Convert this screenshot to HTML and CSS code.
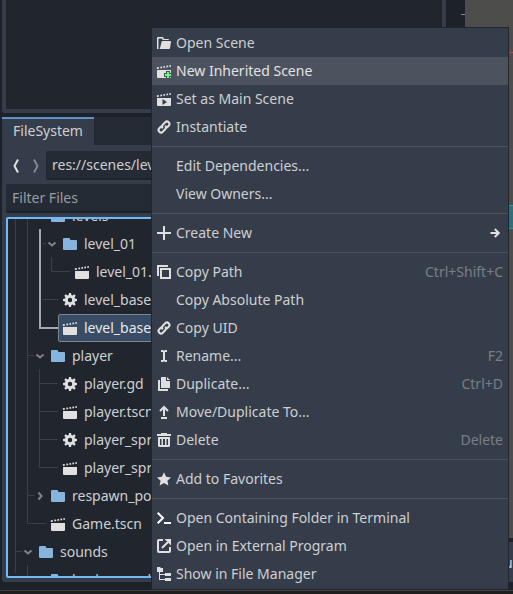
FILE: index.html
```
<!DOCTYPE html>
<html lang="en">
<head>
<meta charset="utf-8">
<title>FileSystem</title>
<link rel="stylesheet" href="styles.css">
</head>
<body>
<svg class="defs" width="0" height="0">
  <symbol id="folder" viewBox="0 0 16 16"><path d="M2 2h5a1 1 0 0 1 1 1a1 1 0 0 0 1 1h5a1 1 0 0 1 1 1v8a1 1 0 0 1-1 1H2a1 1 0 0 1-1-1V3a1 1 0 0 1 1-1z"/></symbol>
  <symbol id="scene" viewBox="0 0 16 16"><path d="M1 7h14v7a1 1 0 0 1-1 1H2a1 1 0 0 1-1-1zM.8 4.300l1.800-.3.400 1.700-2.100.3zM4.200 3.700l1.700-.3.400 1.700-1.700.3zM7.200 3.200l1.700-.3.400 1.700-1.700.3zM10.200 2.700l1.700-.3.400 1.700-1.700.3zM13.200 2.200l1.500-.2.300 1.700-1.500.2z"/></symbol>
  <symbol id="gear" viewBox="0 0 16 16"><path fill-rule="evenodd" d="M7 1h2l.4 2 1.200.5 1.700-1.200 1.400 1.400-1.200 1.700.5 1.200 2 .4v2l-2 .4-.5 1.200 1.200 1.700-1.400 1.400-1.700-1.200-1.200.5L9 15H7l-.4-2-1.200-.5-1.700 1.200-1.400-1.400 1.200-1.700L3 9.400 1 9V7l2-.4.5-1.200-1.200-1.700 1.400-1.400 1.700 1.200L6.600 3zM8 5.800a2.200 2.200 0 1 0 0 4.400a2.200 2.200 0 0 0 0-4.400z"/></symbol>
  <symbol id="down" viewBox="0 0 16 16"><path class="line" d="M4.500 6.500L8 9.500l3.500-3"/></symbol>
  <symbol id="right" viewBox="0 0 16 16"><path class="line" d="M6.500 4.500L9.500 8l-3 3.500"/></symbol>
  <symbol id="link" viewBox="0 0 16 16"><g class="line"><path d="M6.800 9.200a2.500 2.500 0 0 1 0-3.500l2.400-2.400a2.400 2.400 0 0 1 3.500 3.500l-1.900 1.900"/><path d="M9.200 6.800a2.500 2.500 0 0 1 0 3.500l-2.400 2.400a2.400 2.400 0 0 1-3.500-3.500l1.900-1.900"/></g></symbol>
</svg>
<div class="editor">
  <div class="dock">
    <div class="upper"></div>
    <div class="tabs"><div class="tab">FileSystem</div></div>
    <div class="panel">
      <div class="pathbar">
        <svg class="nav" viewBox="0 0 10 16"><path d="M7 1.500L3.500 8 7 14.500"/></svg>
        <svg class="nav off" viewBox="0 0 10 16"><path d="M3 1.500L6.500 8 3 14.500"/></svg>
        <div class="field path">res://scenes/lev</div>
      </div>
      <div class="field filter">Filter Files</div>
      <div class="tree">
        <svg class="guides" width="90" height="357" viewBox="8 219 90 357">
          <path d="M15.500 219V573M27.500 219V523.500H46M16 551.500h6M28 355.500h6M28 495.500h6M27.500 565v11M39.500 369V467.500H58M40 383.500h18M40 411.500h18M40 439.500h18M51.500 257v14.500H70M43 299.500h15M43 243.500h3"/>
          <path class="active" d="M40 229v99h18"/>
        </svg>
        <div class="rows">
          <div class="row d2"><svg></svg><svg class="dir"><use href="#folder"/></svg><span>levels</span></div>
          <div class="row d3"><svg class="arrow"><use href="#down"/></svg><svg class="dir"><use href="#folder"/></svg><span>level_01</span></div>
          <div class="row d4 leaf"><svg><use href="#scene"/></svg><span>level_01.tscn</span></div>
          <div class="row d3 leaf"><svg><use href="#gear"/></svg><span>level_base.gd</span></div>
          <div class="row d3 leaf selected"><svg><use href="#scene"/></svg><span>level_base.tscn</span></div>
          <div class="row d2"><svg class="arrow"><use href="#down"/></svg><svg class="dir"><use href="#folder"/></svg><span>player</span></div>
          <div class="row d3 leaf"><svg><use href="#gear"/></svg><span>player.gd</span></div>
          <div class="row d3 leaf"><svg><use href="#scene"/></svg><span>player.tscn</span></div>
          <div class="row d3 leaf"><svg><use href="#gear"/></svg><span>player_spr</span></div>
          <div class="row d3 leaf"><svg><use href="#scene"/></svg><span>player_spr</span></div>
          <div class="row d2"><svg class="arrow"><use href="#right"/></svg><svg class="dir"><use href="#folder"/></svg><span>respawn_po</span></div>
          <div class="row d2 leaf"><svg><use href="#scene"/></svg><span>Game.tscn</span></div>
          <div class="row d1"><svg class="arrow"><use href="#down"/></svg><svg class="dir"><use href="#folder"/></svg><span>sounds</span></div>
          <div class="row d2"><svg></svg><svg class="dir"><use href="#folder"/></svg><span>background</span></div>
        </div>
      </div>
    </div>
  </div>
  <div class="gutter"><i></i></div>
  <div class="side">
    <div class="view"><div class="red"></div><div class="teal"></div></div>
    <div class="below">u</div>
  </div>
  <div class="footer"></div>

  <div class="menu">
    <div class="item"><svg viewBox="0 0 16 16"><path d="M2 2a1 1 0 0 0-1 1v10.500q0 .5.6.5h.9V3.500H6q0 1.500 1.500 1.500H13q0-1-1-1H8.500Q7.500 4 7.500 3T6.500 2zM6.500 6a1 1 0 0 0-1 1L4 13q0 1-1 1h10a1 1 0 0 0 1-1l1-6q0-1-1-1z"/></svg><span>Open Scene</span></div>
    <div class="item hover"><svg viewBox="0 0 16 16"><use href="#scene"/><path class="cut" d="M10 8h4v2h2v4h-2v2h-4v-2H8v-4h2z"/><path class="green" d="M11 9h2v2h2v2h-2v2h-2v-2H9v-2h2z"/></svg><span>New Inherited Scene</span></div>
    <div class="item"><svg viewBox="0 0 16 16"><use href="#scene"/><path class="hole" d="M6.500 8v6L11 11z"/></svg><span>Set as Main Scene</span></div>
    <div class="item"><svg><use href="#link"/></svg><span>Instantiate</span></div>
    <div class="sep"></div>
    <div class="item"><svg></svg><span>Edit Dependencies...</span></div>
    <div class="item"><svg></svg><span>View Owners...</span></div>
    <div class="sep"></div>
    <div class="item"><svg viewBox="0 0 16 16"><path d="M7 1h2v6h6v2H9v6H7V9H1V7h6z"/></svg><span>Create New</span><svg class="more" viewBox="0 0 16 16"><path class="line" d="M3.500 8H11M7.800 4L11.800 8l-4 4"/></svg></div>
    <div class="sep"></div>
    <div class="item"><svg viewBox="0 0 16 16"><path fill-rule="evenodd" d="M1 1h11v2H3v9H1zM4 4h11v11H4zM6 6v7h7V6z"/></svg><span>Copy Path</span><kbd>Ctrl+Shift+C</kbd></div>
    <div class="item"><svg></svg><span>Copy Absolute Path</span></div>
    <div class="item"><svg><use href="#link"/></svg><span>Copy UID</span></div>
    <div class="item"><svg viewBox="0 0 16 16"><path d="M5 2h2l1 .7L9 2h2v2H9v8h2v2H9l-1-.7-1 .7H5v-2h2V4H5z"/></svg><span>Rename...</span><kbd>F2</kbd></div>
    <div class="item"><svg viewBox="0 0 16 16"><path d="M5 1h5v4h4v7H5zM11 1l3 3h-3zM2 4h2v9h8v2H2z"/></svg><span>Duplicate...</span><kbd>Ctrl+D</kbd></div>
    <div class="item"><svg viewBox="0 0 16 16"><path class="line" d="M8 12V3M4 7l4-4 4 4M5 14h6"/></svg><span>Move/Duplicate To...</span></div>
    <div class="item"><svg viewBox="0 0 16 16"><path fill-rule="evenodd" d="M5 2V1h6v1h4v2H1V2zM2 5h12v9l-1 1H3l-1-1zM4 7v6h1.500V7zM7 7v6h2V7zM10.500 7v6H12V7z"/></svg><span>Delete</span><kbd>Delete</kbd></div>
    <div class="sep"></div>
    <div class="item"><svg viewBox="0 0 16 16"><path d="M8 1.300l2.100 4.500 4.900.6-3.600 3.300 1 4.800L8 12.100l-4.400 2.400 1-4.800L1 6.400l4.900-.6z"/></svg><span>Add to Favorites</span></div>
    <div class="sep"></div>
    <div class="item"><svg class="white" viewBox="0 0 16 16"><path class="line" d="M1.700 2.700L7 8l-5.300 5.300M8 13h7"/></svg><span>Open Containing Folder in Terminal</span></div>
    <div class="item"><svg viewBox="0 0 16 16"><path class="line" d="M7 2H3a1 1 0 0 0-1 1v10a1 1 0 0 0 1 1h10a1 1 0 0 0 1-1V9M6 10l6-6"/><path d="M8.500 1H15v6.500z"/></svg><span>Open in External Program</span></div>
    <div class="item"><svg viewBox="0 0 16 16"><path d="M1 1h3l1 1h2v4H4v2h5V7h6v3H9V9H4v4h5v-1h6v3H9v-1H3V6H1z"/></svg><span>Show in File Manager</span></div>
  </div>
</div>
</body>
</html>
```
FILE: styles.css
```
* { box-sizing: border-box; }
body { margin: 0; background: #1d2229; font: 14px/20px "Noto Sans", sans-serif; color: #cdcfd2; }
svg { width: 16px; height: 16px; flex: none; fill: #e0e0e0; stroke: none; }
.defs { position: absolute; width: 0; height: 0; }
.line { fill: none; stroke: #e0e0e0; stroke-width: 2; }
.editor { position: relative; width: 513px; height: 594px; overflow: hidden; display: grid; grid-template-columns: 446px 19px 48px; grid-template-rows: 590px 4px; }
.dock { padding-left: 2px; display: flex; flex-direction: column; }
.upper { height: 113px; border: solid #363d4a; border-width: 0 4px 4px; border-radius: 0 0 3px 3px; background: #21262e; }
.tabs { margin-top: 4px; height: 28px; background: #252b34; display: flex; }
.tab { width: 92px; background: #363d4a; border-top: 2px solid #5c93c9; padding: 2px 0 0 11px; }
.panel { height: 437px; background: #363d4a; padding: 6px 4px 4px; border-radius: 0 0 3px 3px; }
.pathbar { display: flex; height: 29px; align-items: center; }
.nav { width: 20px; height: 16px; fill: none; stroke: #e0e0e0; stroke-width: 2; }
.nav.off { opacity: .45; }
.field { background: #252b34; border-bottom: 2px solid #1d2229; height: 29px; padding: 4px 6px 0; border-radius: 2px; white-space: nowrap; overflow: hidden; }
.path { flex: 1; }
.filter { margin-top: 4px; color: #999da3; }
.tree { position: relative; margin-top: 4px; height: 361px; border: 2px solid #70bafa; border-radius: 2px; background: #21262e; overflow: hidden; }
.guides { position: absolute; left: 0; top: 0; width: 90px; height: 357px; fill: none; stroke: #3b4048; }
.guides .active { stroke: #a5a8ad; stroke-width: 2; }
.rows { margin-top: -17px; position: relative; }
.row { height: 28px; display: flex; align-items: center; white-space: nowrap; }
.row span { margin-left: 6px; }
.row svg + svg { margin-left: 2px; }
.d1 { padding-left: 12px; }
.d2 { padding-left: 24px; }
.d3 { padding-left: 36px; }
.d4 { padding-left: 48px; }
.leaf::before { content: ""; width: 18px; flex: none; }
.arrow { opacity: .5; }
.dir { fill: #87b4dc; }
.selected { margin-left: 50px; padding-left: 3px; background: #384d65; border: 1px solid #7b8793; border-radius: 2px; color: #e6e8ea; }
.selected::before { display: none; }
.gutter { background: #1d2229; padding-top: 14px; }
.gutter i { display: block; width: 4px; height: 1px; margin-left: 15px; background: #85878a; }
.side { display: flex; flex-direction: column; }
.view { height: 538px; background: #4d4d4c; padding-top: 52px; }
.red { height: 1px; background: #dc3b50; }
.teal { margin-top: 152px; height: 24px; background: #316f78; border: solid #159bad; border-width: 1px 0; }
.below { margin-top: 4px; height: 40px; background: #363d4a; padding: 11px 0 0 39px; }
.footer { grid-column: 1 / -1; background: #1e1e1e; border-top: 1px solid #454545; }
.menu { position: absolute; left: 151px; top: 27px; width: 358px; height: 563px; background: #363d4a; border: solid #21262e; border-width: 1px; padding-top: 1px; }
.item { height: 28px; padding: 0 5px 0 4px; display: flex; align-items: center; gap: 4px; white-space: nowrap; }
.hover { background: #4d535e; color: #e0e2e4; }
.item kbd, .more { margin-left: auto; }
.item kbd { font: inherit; color: #797e86; }
.sep { height: 11px; padding-top: 5px; }
.sep::before { content: ""; display: block; height: 1px; background: #4c525e; }
.cut { fill: #4d535e; }
.green { fill: #5fff79; }
.hole { fill: #363d4a; }
.white .line { stroke: #fff; }
```
